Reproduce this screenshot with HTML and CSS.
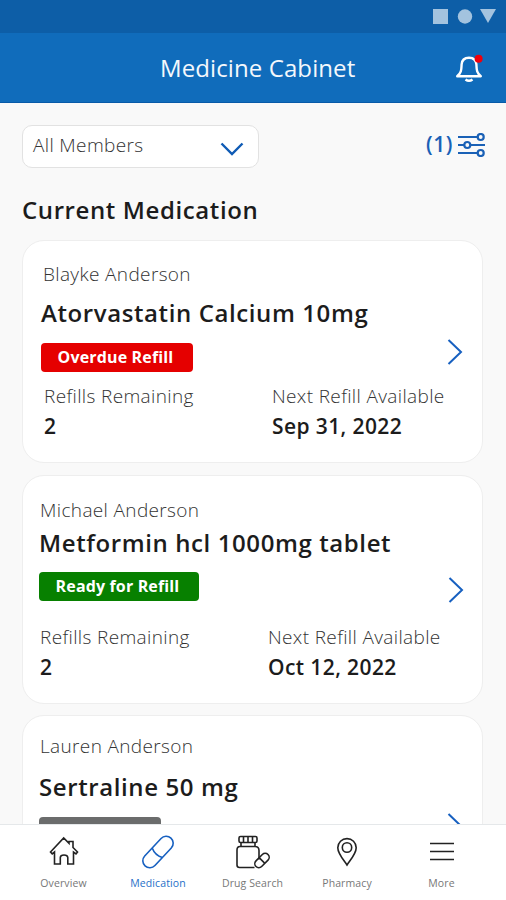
FILE: index.html
```html
<!DOCTYPE html>
<html lang="en">
<head>
    <meta charset="UTF-8">
    <meta name="viewport" content="width=device-width, initial-scale=1.0">
    <title>Medicine Cabinet</title>
    <link rel="stylesheet" href="styles.css">
</head>
<body>
    <div class="app">
        <div class="status-bar">
            <svg width="64" height="16" viewBox="0 0 64 16" fill="#a3c3df">
                <rect x="1" y="1" width="15" height="15"/>
                <circle cx="33" cy="8.5" r="7.2"/>
                <path d="M48 1h16l-8 14z"/>
            </svg>
        </div>

        <header class="app-header">
            <h1>Medicine Cabinet</h1>
            <button class="bell">
                <svg width="28" height="30" viewBox="0 0 28 30" fill="none" stroke="#fff" stroke-width="2.4">
                    <path d="M2.2 23.2C6.8 19.5 6.3 16 6.6 11.5C6.9 7 9.800 4.800 14 4.800S21.1 7 21.4 11.5C21.7 16 21.2 19.5 25.8 23.200Z" stroke-linejoin="round"/>
                    <path d="M10.5 26.500q3.5 2.500 7 0" stroke-width="2.6"/>
                    <circle cx="23.6" cy="5.8" r="4" fill="#f0000c" stroke="none"/>
                </svg>
            </button>
        </header>

        <main class="content">
            <div class="toolbar">
                <div class="select">
                    <span>All Members</span>
                    <svg width="24" height="14" viewBox="0 0 24 14" fill="none" stroke="#0f5bb5" stroke-width="2.4">
                        <path d="M1.5 1.5L12 12L22.5 1.5"/>
                    </svg>
                </div>
                <div class="filter">
                    <span>(1)</span>
                    <svg width="28" height="24" viewBox="0 0 28 24" fill="none" stroke="#1a61b6" stroke-width="2.2">
                        <path d="M0 4h19.5M0 12h6M12.5 12H27M0 20h19.5"/>
                        <circle cx="22.7" cy="4" r="3"/>
                        <circle cx="9.3" cy="12" r="3"/>
                        <circle cx="22.7" cy="20" r="3"/>
                    </svg>
                </div>
            </div>

            <h2>Current Medication</h2>

            <section class="card card-overdue">
                <p class="member">Blayke Anderson</p>
                <h3>Atorvastatin Calcium 10mg</h3>
                <div class="status-row">
                    <span class="badge badge-red">Overdue Refill</span>
                    <svg class="chevron" width="16" height="26" viewBox="0 0 16 26"><path d="M1.5 1L14 13L1.5 25"/></svg>
                </div>
                <div class="refills">
                    <div class="refill-count">
                        <p class="label">Refills Remaining</p>
                        <p class="value">2</p>
                    </div>
                    <div>
                        <p class="label">Next Refill Available</p>
                        <p class="value">Sep 31, 2022</p>
                    </div>
                </div>
            </section>

            <section class="card card-ready">
                <p class="member">Michael Anderson</p>
                <h3>Metformin hcl 1000mg tablet</h3>
                <div class="status-row">
                    <span class="badge badge-green">Ready for Refill</span>
                    <svg class="chevron" width="16" height="26" viewBox="0 0 16 26"><path d="M1.5 1L14 13L1.5 25"/></svg>
                </div>
                <div class="refills">
                    <div class="refill-count">
                        <p class="label">Refills Remaining</p>
                        <p class="value">2</p>
                    </div>
                    <div>
                        <p class="label">Next Refill Available</p>
                        <p class="value">Oct 12, 2022</p>
                    </div>
                </div>
            </section>

            <section class="card card-next">
                <p class="member">Lauren Anderson</p>
                <h3>Sertraline 50 mg</h3>
                <div class="status-row">
                    <span class="badge badge-gray"></span>
                    <svg class="chevron" width="16" height="26" viewBox="0 0 16 26"><path d="M1.5 1L14 13L1.5 25"/></svg>
                </div>
            </section>
        </main>

        <nav class="tabs">
            <a class="tab">
                <svg width="36" height="36" viewBox="0 0 36 36">
                    <path d="M4.500 18L17.700 4L23 9.300V7.500h4v6L31.500 18L30 19.800L27.500 18V30H21.800V23.500Q21.500 21 18 21T14.300 23.500V30H8.500V18L6.200 19.800Z"/>
                </svg>
                <span>Overview</span>
            </a>
            <a class="tab active">
                <svg width="36" height="36" viewBox="0 0 36 36">
                    <g transform="rotate(-47 18 18)">
                        <rect x="-1" y="11" width="38" height="14" rx="7"/>
                        <path d="M17 11q-3.500 7 0 14"/>
                    </g>
                </svg>
                <span>Medication</span>
            </a>
            <a class="tab">
                <svg width="36" height="36" viewBox="0 0 36 36">
                    <rect x="4" y="2.500" width="18" height="6" rx="1.500"/>
                    <path d="M8.500 3v5.500M13 3v5.500M17.500 3v5.500M6 8.500v4h14v-4M20 12.500H5Q2 12.500 2 16v15Q2 33.500 4.500 33.500h15M20 12.500q4 0 4 4v9"/>
                    <g transform="rotate(-45 27 26.500)"><rect x="18.500" y="22.500" width="17" height="8" rx="4"/><path d="M27 22.500v8"/></g>
                </svg>
                <span>Drug Search</span>
            </a>
            <a class="tab">
                <svg width="36" height="36" viewBox="0 0 36 36">
                    <path d="M18 31C15.500 27 8.800 20 8.800 13.800a9.200 9.200 0 0 1 18.400 0C27.200 20 20.500 27 18 31Z"/>
                    <circle cx="18" cy="13.500" r="4.700"/>
                </svg>
                <span>Pharmacy</span>
            </a>
            <a class="tab">
                <svg width="36" height="36" viewBox="0 0 36 36">
                    <path d="M6 9.500h24M6 17.500h24M6 25.500h24"/>
                </svg>
                <span>More</span>
            </a>
        </nav>
    </div>
</body>
</html>
```

FILE: styles.css
```css
* {
    box-sizing: border-box;
    margin: 0;
    padding: 0;
}
body {
    font-family: "Open Sans", sans-serif;
    background: #f9f9f9;
    color: #1c1c1c;
}
.app {
    display: flex;
    flex-direction: column;
    height: 900px;
    overflow: hidden;
}
.status-bar {
    height: 33px;
    background: #0d5ea7;
    display: flex;
    justify-content: flex-end;
    padding: 8px 10px 0 0;
}
.app-header {
    height: 70px;
    flex-shrink: 0;
    background: #106cbb;
    border-bottom: 1px solid #075aa8;
    display: flex;
    justify-content: space-between;
    align-items: center;
    padding: 0 23px 0 160px;
}
.app-header h1 {
    color: #f4f8fc;
    font-size: 24px;
    font-weight: 400;
    line-height: 32px;
    letter-spacing: 0.1px;
    white-space: nowrap;
}
.bell {
    height: 30px;
    background: none;
    border: none;
}
.content {
    flex: 1;
    min-height: 0;
    overflow: hidden;
    padding: 22px 23px 0 22px;
}
.toolbar {
    display: flex;
    justify-content: space-between;
    height: 43px;
}
.select {
    width: 237px;
    background: #fff;
    border: 1px solid #e2e2e2;
    border-radius: 10px;
    display: flex;
    justify-content: space-between;
    align-items: center;
    padding: 0 14px 0 10px;
    font-size: 19px;
    font-weight: 300;
    letter-spacing: 0.35px;
    color: #333;
}
.select span {
    margin-top: -3px;
}
.select svg {
    margin-top: 4px;
}
.filter {
    display: flex;
    align-items: center;
    gap: 5px;
    height: 40px;
    color: #1a61b6;
    font-size: 21px;
    font-weight: 600;
    letter-spacing: 0.6px;
    margin-right: -3px;
}
.filter span {
    margin-top: -2px;
}
h2 {
    font-size: 24px;
    font-weight: 600;
    line-height: 32px;
    letter-spacing: 0.6px;
    margin: 26px 0 14px;
}
.card {
    background: #fff;
    border: 1px solid #eee;
    border-radius: 22px;
    padding-left: 18px;
    margin-bottom: 12px;
}
.card-overdue {
    height: 223px;
    padding-top: 19px;
}
.card-ready {
    height: 229px;
    padding: 20px 0 0 16px;
    margin-bottom: 11px;
}
.card-next {
    height: 229px;
    padding: 16px 0 0 16px;
}
.member,
.label {
    font-size: 19px;
    font-weight: 300;
    line-height: 28px;
    letter-spacing: 0.36px;
    color: #333;
}
.card h3 {
    font-size: 24px;
    font-weight: 600;
    line-height: 32px;
    letter-spacing: 0.6px;
    white-space: nowrap;
}
.member {
    margin-left: 1px;
}
.card-overdue .member {
    margin-left: 2px;
}
.card-overdue h3 {
    margin-top: 9px;
}
.card-ready h3 {
    margin-top: 3px;
}
.card-next h3 {
    margin-top: 11px;
}
.status-row {
    display: flex;
    justify-content: space-between;
    margin-top: 14px;
    padding-right: 19px;
}
.card-ready .status-row {
    margin-top: 13px;
    padding-right: 18px;
}
.badge {
    height: 29px;
    border-radius: 4px;
    color: #fff;
    font-size: 16px;
    font-weight: 700;
    line-height: 28px;
    letter-spacing: 0.15px;
    text-align: center;
    padding-right: 3px;
}
.badge-red {
    width: 152px;
    background: #e50000;
}
.badge-green {
    width: 160px;
    background: #078000;
}
.badge-gray {
    width: 122px;
    background: #6b6c6c;
}
.chevron {
    fill: none;
    stroke: #1760c0;
    stroke-width: 2;
    margin: -4px 0 -1px;
}
.card-ready .chevron {
    margin: 5px 0 -2px;
}
.refills {
    display: flex;
    margin: 10px 0 0 3px;
}
.card-ready .refills {
    margin: 22px 0 0 1px;
}
.refill-count {
    width: 228px;
}
.value {
    font-size: 21px;
    font-weight: 600;
    line-height: 32px;
    letter-spacing: 0.4px;
}
.tabs {
    height: 76px;
    flex-shrink: 0;
    background: #fff;
    border-top: 1px solid #e5e8ea;
    display: grid;
    grid-template-columns: repeat(5, 94.5px);
    justify-content: center;
    padding-right: 1px;
}
.tab {
    display: flex;
    flex-direction: column;
    align-items: center;
    padding-top: 9px;
    font-size: 10.5px;
    line-height: 16px;
    letter-spacing: 0.1px;
    color: #777;
}
.tab svg {
    fill: none;
    stroke: #222;
    stroke-width: 1.6;
    overflow: visible;
}
.tab span {
    margin-top: 5px;
}
.tab.active {
    color: #2670c8;
}
.tab.active svg {
    stroke: #1760c0;
}
```
